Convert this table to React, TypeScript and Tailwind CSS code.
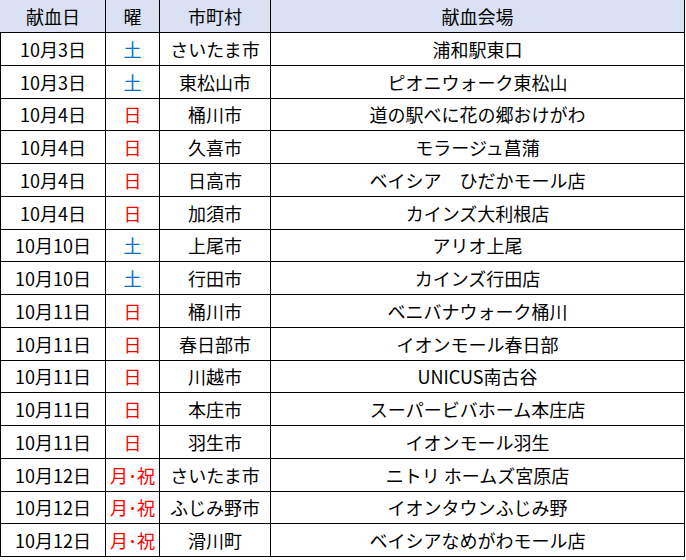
const rows: [string, string, string, string][] = [
  ["10月3日", "土", "さいたま市", "浦和駅東口"],
  ["10月3日", "土", "東松山市", "ピオニウォーク東松山"],
  ["10月4日", "日", "桶川市", "道の駅べに花の郷おけがわ"],
  ["10月4日", "日", "久喜市", "モラージュ菖蒲"],
  ["10月4日", "日", "日高市", "ベイシア\u3000ひだかモール店"],
  ["10月4日", "日", "加須市", "カインズ大利根店"],
  ["10月10日", "土", "上尾市", "アリオ上尾"],
  ["10月10日", "土", "行田市", "カインズ行田店"],
  ["10月11日", "日", "桶川市", "ベニバナウォーク桶川"],
  ["10月11日", "日", "春日部市", "イオンモール春日部"],
  ["10月11日", "日", "川越市", "UNICUS南古谷"],
  ["10月11日", "日", "本庄市", "スーパービバホーム本庄店"],
  ["10月11日", "日", "羽生市", "イオンモール羽生"],
  ["10月12日", "月･祝", "さいたま市", "ニトリ ホームズ宮原店"],
  ["10月12日", "月･祝", "ふじみ野市", "イオンタウンふじみ野"],
  ["10月12日", "月･祝", "滑川町", "ベイシアなめがわモール店"],
];

const cell = "flex items-center justify-center whitespace-nowrap border-r border-b border-black";

export default function App() {
  return (
    <div
      className="w-[686px] h-[560px] bg-white text-black text-[18px] leading-none overflow-hidden"
      style={{ fontFamily: '"Noto Sans CJK JP", "Noto Sans", sans-serif' }}
    >
      <div className="grid grid-cols-[106px_54px_111px_414px] grid-rows-[33px_repeat(16,32.75px)]">
        {/* header */}
        <div className={`${cell} bg-[#d9e1f2] pl-px`}>献血日</div>
        <div className={`${cell} bg-[#d9e1f2]`}>曜</div>
        <div className={`${cell} bg-[#d9e1f2]`}>市町村</div>
        <div className={`${cell} bg-[#d9e1f2]`}>献血会場</div>

        {rows.map(([date, day, city, place], i) => (
          <div key={i} className="contents">
            <div className={`${cell} border-l`}>{date}</div>
            <div
              className={`${cell} ${day === "土" ? "text-[#0070c0]" : "text-[#ff0000]"}`}
            >
              {day}
            </div>
            <div className={cell}>{city}</div>
            <div className={cell}>{place}</div>
          </div>
        ))}
      </div>
    </div>
  );
}
